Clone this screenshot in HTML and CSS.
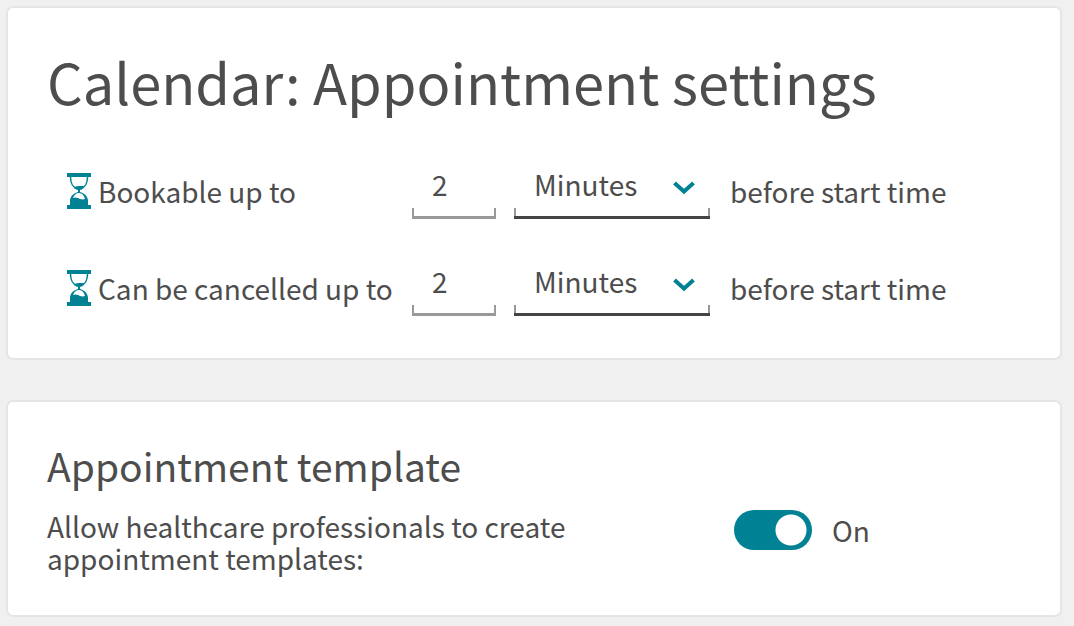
FILE: index.html
```
<!DOCTYPE html>
<html lang="en">
<head>
    <meta charset="UTF-8">
    <meta name="viewport" content="width=device-width, initial-scale=1.0">
    <title>Calendar: Appointment settings</title>
    <link rel="stylesheet" href="styles.css">
</head>
<body>

    <section class="card settings">
        <h1>Calendar: Appointment settings</h1>

        <div class="setting-row">
            <svg class="hourglass" viewBox="0 0 24 36" aria-hidden="true">
                <path class="fill" d="M0 0h24v4H0zM0 32h24v4H0zM7 15q1-2 5-2l5 0q-1 3-4 4v2c4 1 8 4 8 9v4H3v-4c0-5 4-8 8-9v-2q-3-1-4-2z"/>
                <path class="sand-line" d="M3.500 4c0 7 2 10 7 12M20.500 4c0 7-2 10-7 12"/>
                <path class="gap" d="M6 25c1-3 3-5 6-5s5 2 6 6c-3 1-5 0-7-1q-3-1-5 0z"/>
            </svg>
            <label for="bookValue">Bookable up to</label>
            <input type="text" id="bookValue" class="field number" value="2">
            <div class="select-wrap">
                <select id="bookUnit" class="field unit" aria-label="Bookable unit">
                    <option>Minutes</option>
                    <option>Hours</option>
                    <option>Days</option>
                </select>
                <svg class="chevron" viewBox="0 0 22 14" aria-hidden="true"><path d="M1.500 2l9.500 8.500 9.500-8.500"/></svg>
            </div>
            <span>before start time</span>
        </div>

        <div class="setting-row">
            <svg class="hourglass" viewBox="0 0 24 36" aria-hidden="true">
                <path class="fill" d="M0 0h24v4H0zM0 32h24v4H0zM7 15q1-2 5-2l5 0q-1 3-4 4v2c4 1 8 4 8 9v4H3v-4c0-5 4-8 8-9v-2q-3-1-4-2z"/>
                <path class="sand-line" d="M3.500 4c0 7 2 10 7 12M20.500 4c0 7-2 10-7 12"/>
                <path class="gap" d="M6 25c1-3 3-5 6-5s5 2 6 6c-3 1-5 0-7-1q-3-1-5 0z"/>
            </svg>
            <label for="cancelValue">Can be cancelled up to</label>
            <input type="text" id="cancelValue" class="field number" value="2">
            <div class="select-wrap">
                <select id="cancelUnit" class="field unit" aria-label="Cancellation unit">
                    <option>Minutes</option>
                    <option>Hours</option>
                    <option>Days</option>
                </select>
                <svg class="chevron" viewBox="0 0 22 14" aria-hidden="true"><path d="M1.500 2l9.500 8.500 9.500-8.500"/></svg>
            </div>
            <span>before start time</span>
        </div>
    </section>

    <section class="card template">
        <h2>Appointment template</h2>
        <div class="template-row">
            <label for="allowTemplates">Allow healthcare professionals to create appointment templates:</label>
            <div class="toggle">
                <input type="checkbox" id="allowTemplates" class="switch" checked>
                <span>On</span>
            </div>
        </div>
    </section>

</body>
</html>
```

FILE: styles.css
```
* {
    box-sizing: border-box;
}

body {
    margin: 0;
    padding: 6px 12px 10px 6px;
    background-color: #f0f0f0;
    color: #4d4d4d;
    font-family: "Noto Sans CJK SC", "Noto Sans", sans-serif;
    font-size: 28px;
    line-height: 32px;
}

.card {
    background-color: #fff;
    border: 2px solid #e5e5e5;
    border-radius: 7px;
}

.settings {
    padding: 37px 39px 42px;
    margin-bottom: 40px;
}

h1 {
    margin: 0 0 45px;
    font-size: 56px;
    font-weight: 400;
    line-height: 72px;
}

.setting-row {
    display: grid;
    grid-template-columns: 24px 321px 84px 214px 1fr;
    align-items: center;
    padding-left: 20px;
}

.setting-row + .setting-row {
    margin-top: 40px;
}

.setting-row label {
    padding-left: 7px;
    white-space: nowrap;
}

.setting-row span {
    padding-left: 20px;
}

.hourglass {
    width: 24px;
    height: 36px;
}

.hourglass .fill {
    fill: #008294;
}

.hourglass .sand-line {
    fill: none;
    stroke: #008294;
    stroke-width: 1.500;
}

.hourglass .gap {
    fill: #fff;
}

/* underlined box with short side ticks */
.field {
    width: 100%;
    height: 57px;
    margin: 0;
    padding: 0 20px 10px;
    border: none;
    border-bottom: 3px solid #999;
    border-radius: 0;
    background: linear-gradient(#999, #999) left bottom / 2px 8px no-repeat,
        linear-gradient(#999, #999) right bottom / 2px 8px no-repeat;
    color: inherit;
    font: inherit;
    outline: none;
    appearance: none;
}

.unit {
    border-bottom-color: #444;
}

.select-wrap {
    position: relative;
    margin-left: 18px;
}

.chevron {
    position: absolute;
    top: 19px;
    right: 15px;
    width: 22px;
    height: 14px;
    pointer-events: none;
}

.chevron path {
    fill: none;
    stroke: #008294;
    stroke-width: 4;
}

.template {
    padding: 39px 39px 41px;
}

h2 {
    margin: 0 0 21px;
    font-size: 39px;
    font-weight: 400;
    line-height: 48px;
}

.template-row {
    display: grid;
    grid-template-columns: 687px 1fr;
    align-items: start;
}

.template-row label {
    max-width: 560px;
}

.toggle {
    display: flex;
    align-items: center;
    gap: 20px;
}

.switch {
    width: 78px;
    height: 40px;
    margin: 0;
    border-radius: 20px;
    background: #008294 radial-gradient(circle, #fff 15px, transparent 16px) 37px center / 40px 40px no-repeat;
    appearance: none;
}
```
